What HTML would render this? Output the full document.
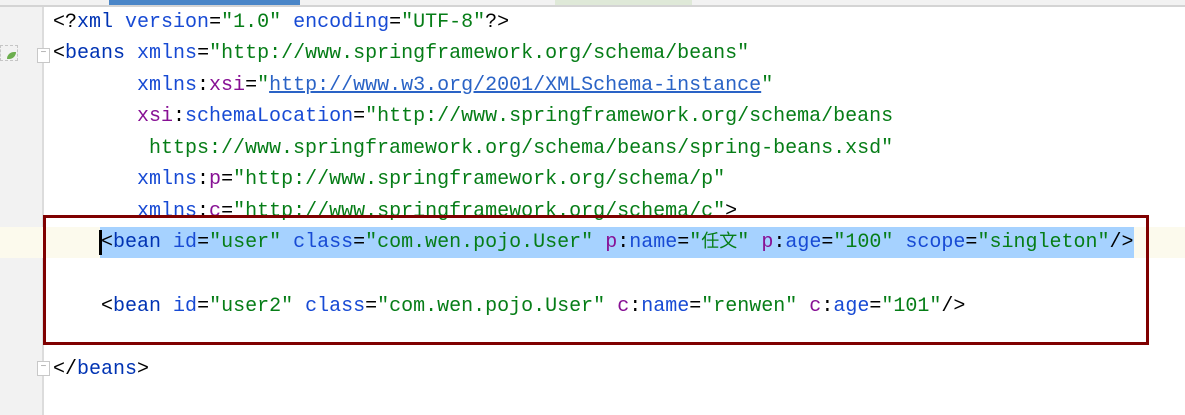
<!DOCTYPE html>
<html><head><meta charset="utf-8"><style>
body{margin:0;width:1185px;height:415px;background:#fff;overflow:hidden;position:relative;font-family:"Liberation Mono","Noto Sans CJK SC",monospace;font-size:20px}
.top{position:absolute;left:0;top:0;width:1185px;height:5px;background:#f2f2f2;border-bottom:2px solid #d4d4d4}
.gut{position:absolute;left:0;top:7px;width:42px;height:408px;background:#f2f2f2;border-right:2px solid #dcdcdc}
.cur{position:absolute;left:0;top:227px;width:1185px;height:31px;background:#fcfaed}
.sel{position:absolute;left:100px;top:227px;width:1034px;height:31px;background:#a6d2ff}
.code{position:absolute;left:53px;top:7px;line-height:31.45px;white-space:pre;color:#000}
.t{color:#0033b3}.a{color:#174ad4}.v{color:#067d17}.n{color:#871094}
.u{color:#2a63c6;text-decoration:underline}
.cj{font-size:18px;letter-spacing:0}
.box{position:absolute;left:43px;top:215px;width:1100px;height:124px;border:3px solid #7f0000}
.caret{position:absolute;left:99px;top:230px;width:3px;height:25px;background:#000}
</style></head><body>
<div class="top"></div>
<div style="position:absolute;left:109px;top:0;width:191px;height:5px;background:#4a86c8"></div>
<div style="position:absolute;left:555px;top:0;width:137px;height:5px;background:#dfe9d8"></div>
<div class="gut"></div>
<div class="cur"></div>
<div class="sel"></div>
<div style="position:absolute;left:0;top:45px;width:16px;height:14px;border:1px dashed #aaa;opacity:.6"></div>
<div style="position:absolute;left:7px;top:52px;width:9px;height:7px;background:#6cae4e;border-radius:8px 0 8px 0"></div>
<div style="position:absolute;left:37px;top:48px;width:11px;height:13px;border:1px solid #c8c8c8;background:#fff;font-size:10px;line-height:10px;text-align:center;color:#999">−</div>
<div style="position:absolute;left:37px;top:361px;width:11px;height:13px;border:1px solid #c8c8c8;background:#fff;font-size:10px;line-height:12px;text-align:center;color:#999">−</div>
<div class="code">&lt;?<span class="t">xml</span> <span class="a">version</span>=<span class="v">"1.0"</span> <span class="a">encoding</span>=<span class="v">"UTF-8"</span>?&gt;
&lt;<span class="t">beans</span> <span class="a">xmlns</span>=<span class="v">"http://www.springframework.org/schema/beans"</span>
       <span class="a">xmlns</span>:<span class="n">xsi</span>=<span class="v">"</span><span class="u">http://www.w3.org/2001/XMLSchema-instance</span><span class="v">"</span>
       <span class="n">xsi</span>:<span class="a">schemaLocation</span>=<span class="v">"http://www.springframework.org/schema/beans</span>
<span class="v">        https://www.springframework.org/schema/beans/spring-beans.xsd"</span>
       <span class="a">xmlns</span>:<span class="n">p</span>=<span class="v">"http://www.springframework.org/schema/p"</span>
       <span class="a">xmlns</span>:<span class="n">c</span>=<span class="v">"http://www.springframework.org/schema/c"</span>&gt;
    &lt;<span class="t">bean</span> <span class="a">id</span>=<span class="v">"user"</span> <span class="a">class</span>=<span class="v">"com.wen.pojo.User"</span> <span class="n">p</span>:<span class="a">name</span>=<span class="v">"<span class="cj">任文</span>"</span> <span class="n">p</span>:<span class="a">age</span>=<span class="v">"100"</span> <span class="a">scope</span>=<span class="v">"singleton"</span>/&gt;

    &lt;<span class="t">bean</span> <span class="a">id</span>=<span class="v">"user2"</span> <span class="a">class</span>=<span class="v">"com.wen.pojo.User"</span> <span class="n">c</span>:<span class="a">name</span>=<span class="v">"renwen"</span> <span class="n">c</span>:<span class="a">age</span>=<span class="v">"101"</span>/&gt;

&lt;/<span class="t">beans</span>&gt;</div>
<div class="caret"></div>
<div class="box"></div>
</body></html>
